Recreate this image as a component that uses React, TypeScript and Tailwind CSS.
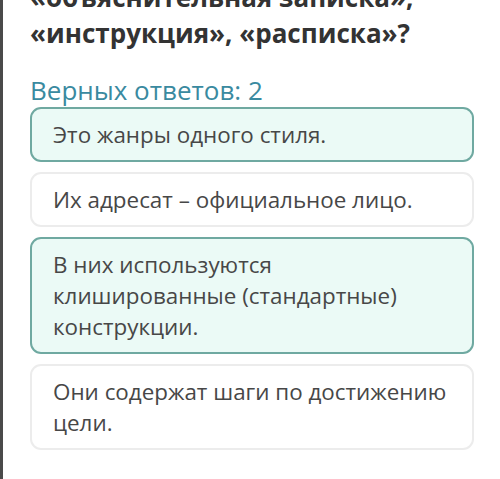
const answers = [
  { id: 1, lines: ["Это жанры одного стиля."], correct: true },
  { id: 2, lines: ["Их адресат – официальное лицо."], correct: false },
  { id: 3, lines: ["В них используются", "клишированные (стандартные)", "конструкции."], correct: true },
  { id: 4, lines: ["Они содержат шаги по достижению", "цели."], correct: false },
]

export default function App() {
  return (
    <div className="h-[479px] w-[500px] overflow-hidden bg-white border-l-[3px] border-[#4a4a4a] font-['Open_Sans',sans-serif]">
      <div className="pl-[27px] pr-[26px]">
        {/* question, scrolled so the first line is cut off */}
        <h1 className="-mt-[21px] text-[26px] leading-[36px] font-bold text-[#333333]">
          «объяснительная записка»,
          <br />
          «инструкция», «расписка»?
        </h1>

        <p className="mt-[24px] text-[26px] leading-[30px] text-[#3a8aa0]">Верных ответов: 2</p>

        <div className="mt-[2px] flex flex-col gap-[10px]">
          {answers.map((a) => (
            <div
              key={a.id}
              className={
                a.correct
                  ? "rounded-[11px] border-2 border-[#6fa9a1] bg-[#ebfaf6] px-[21px] py-[10px]"
                  : "rounded-[11px] border-2 border-[#ececec] bg-white px-[21px] py-[10px]"
              }
            >
              <p className="text-[22.4px] leading-[31px] text-[#474747]">
                {a.lines.map((l, i) => (
                  <span key={i} className="block">
                    {l}
                  </span>
                ))}
              </p>
            </div>
          ))}
        </div>
      </div>
    </div>
  )
}
